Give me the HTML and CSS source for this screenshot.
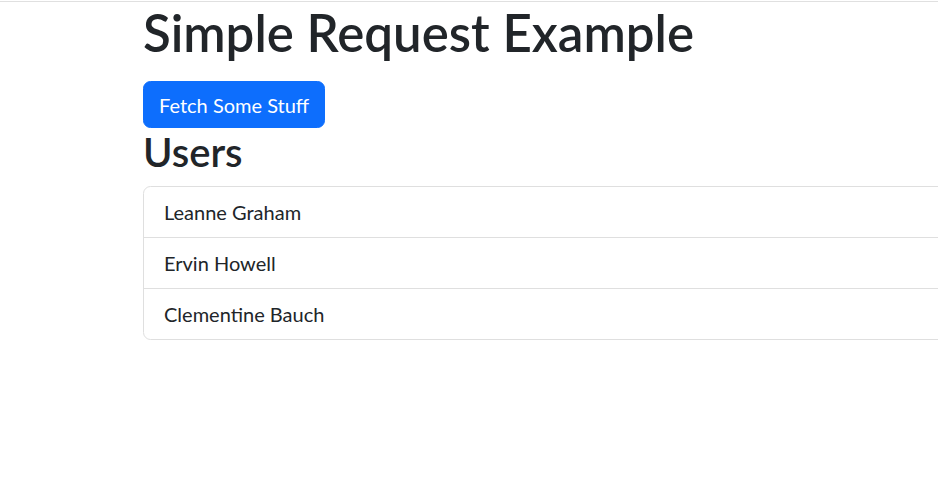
FILE: index.html
```html
<!DOCTYPE html>
<html lang="en">
<head>
<meta charset="utf-8">
<title>Simple Request Example</title>
<link rel="stylesheet" href="styles.css">
</head>
<body>
<div class="topline"></div>
<main class="container">
  <h1 class="title">Simple Request Example</h1>
  <button class="btn" type="button">Fetch Some Stuff</button>
  <h2 class="subtitle">Users</h2>
  <ul class="list">
    <li class="item">Leanne Graham</li>
    <li class="item">Ervin Howell</li>
    <li class="item">Clementine Bauch</li>
  </ul>
</main>
</body>
</html>
```
FILE: styles.css
```css
html, body {
  margin: 0;
  padding: 0;
  background: #fff;
  overflow: hidden;
}
body {
  font-family: "Lato", "Open Sans", sans-serif;
  color: #212529;
  font-size: 20px;
  line-height: 1.5;
}
.topline {
  height: 1px;
  margin-top: 1px;
  background: #e0e0e0;
}
.container {
  padding-left: 143px;
  margin-right: -200px;
}
.title {
  margin: 1px 0 18px;
  font-size: 51px;
  font-weight: 600;
  line-height: 60px;
}
.btn {
  display: block;
  font-family: inherit;
  font-size: 20px;
  line-height: 30px;
  color: #fff;
  background: #0d6efd;
  border: 1px solid #0d6efd;
  border-radius: 7.5px;
  padding: 7.5px 15px;
  margin: 0;
  cursor: pointer;
}
.subtitle {
  margin: 0 0 10px;
  font-size: 40px;
  font-weight: 600;
  line-height: 48px;
}
.list {
  list-style: none;
  margin: 0;
  padding: 0;
  border: 1px solid #dfdfdf;
  border-radius: 7.5px;
}
.item {
  padding: 10px 20px;
  line-height: 30px;
  border-top: 1px solid #dfdfdf;
}
.item:first-child {
  border-top: none;
}
```
